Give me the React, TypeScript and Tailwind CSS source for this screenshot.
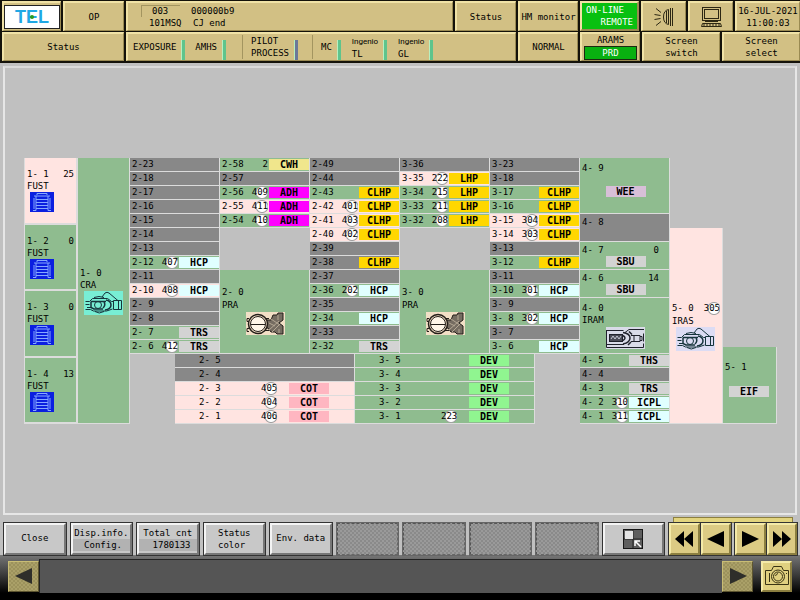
import type { ReactNode } from "react";
import clsx from "clsx";

type State = "off" | "idle" | "busy";

interface Slot {
  id: string;
  state: State;
  wafer?: string;
  plain?: boolean;
  tag?: string;
}

const STATE_BG: Record<State, string> = {
  off: "bg-[#888888]",
  idle: "bg-[#8fbc8f]",
  busy: "bg-[#ffe4e1]",
};

const TAG_BG: Record<string, string> = {
  CLHP: "bg-[#ffd700]",
  LHP: "bg-[#ffd700]",
  ADH: "bg-[#ff00ff]",
  HCP: "bg-[#e0ffff]",
  ICPL: "bg-[#e0ffff]",
  TRS: "bg-[#d3d3d3]",
  THS: "bg-[#d3d3d3]",
  SBU: "bg-[#d3d3d3]",
  EIF: "bg-[#d3d3d3]",
  WEE: "bg-[#d8bfd8]",
  CWH: "bg-[#f0e68c]",
  COT: "bg-[#ffb6c1]",
  DEV: "bg-[#90f590]",
};

const s = (id: string, state: State = "off", tag?: string, wafer?: string, plain?: boolean): Slot => ({
  id,
  state,
  tag,
  wafer,
  plain,
});

const COL_A: Slot[] = [
  s("2-23"), s("2-18"), s("2-17"), s("2-16"), s("2-15"), s("2-14"), s("2-13"),
  s("2-12", "idle", "HCP", "407"),
  s("2-11"),
  s("2-10", "busy", "HCP", "408"),
  s("2- 9"), s("2- 8"),
  s("2- 7", "idle", "TRS"),
  s("2- 6", "idle", "TRS", "412"),
];
const COL_B: Slot[] = [
  s("2-58", "idle", "CWH", "2", true),
  s("2-57"),
  s("2-56", "idle", "ADH", "409"),
  s("2-55", "busy", "ADH", "411"),
  s("2-54", "idle", "ADH", "410"),
];
const COL_C: Slot[] = [
  s("2-49"), s("2-44"),
  s("2-43", "idle", "CLHP"),
  s("2-42", "busy", "CLHP", "401"),
  s("2-41", "busy", "CLHP", "403"),
  s("2-40", "busy", "CLHP", "402"),
  s("2-39"),
  s("2-38", "off", "CLHP"),
  s("2-37"),
  s("2-36", "idle", "HCP", "202"),
  s("2-35"),
  s("2-34", "idle", "HCP"),
  s("2-33"),
  s("2-32", "idle", "TRS"),
];
const COL_D: Slot[] = [
  s("3-36"),
  s("3-35", "busy", "LHP", "222"),
  s("3-34", "idle", "LHP", "215"),
  s("3-33", "idle", "LHP", "211"),
  s("3-32", "idle", "LHP", "208"),
];
const COL_E: Slot[] = [
  s("3-23"), s("3-18"),
  s("3-17", "idle", "CLHP"),
  s("3-16", "idle", "CLHP"),
  s("3-15", "busy", "CLHP", "304"),
  s("3-14", "busy", "CLHP", "303"),
  s("3-13"),
  s("3-12", "idle", "CLHP"),
  s("3-11"),
  s("3-10", "idle", "HCP", "301"),
  s("3- 9"),
  s("3- 8", "idle", "HCP", "302"),
  s("3- 7"),
  s("3- 6", "idle", "HCP"),
];
const COL_F: Slot[] = [
  s("4- 5", "idle", "THS"),
  s("4- 4"),
  s("4- 3", "idle", "TRS"),
  s("4- 2", "idle", "ICPL", "310"),
  s("4- 1", "idle", "ICPL", "311"),
];
const COAT: Slot[] = [
  s("2- 5"), s("2- 4"),
  s("2- 3", "busy", "COT", "405"),
  s("2- 2", "busy", "COT", "404"),
  s("2- 1", "busy", "COT", "406"),
];
const DEVELOP: Slot[] = [
  s("3- 5", "idle", "DEV"),
  s("3- 4", "idle", "DEV"),
  s("3- 3", "idle", "DEV"),
  s("3- 2", "idle", "DEV"),
  s("3- 1", "idle", "DEV", "223"),
];

const EDGE = "border-r border-b border-[#dcdcdc]";

function Wafer({ children }: { children: ReactNode }) {
  return (
    <span className="inline-block bg-[radial-gradient(circle_at_10px_50%,#ffffff_5px,#a0a0a0_6px,transparent_7px)] leading-[13px]">
      {children}
    </span>
  );
}

function Tag({ name }: { name: string }) {
  return (
    <span className={clsx("block w-10 shrink-0 text-center text-[10px] leading-[11px] font-bold text-black", TAG_BG[name])}>
      {name}
    </span>
  );
}

function SlotRow({ slot }: { slot: Slot }) {
  return (
    <div className={clsx("flex h-[14px] items-center pl-[2px] leading-[13px]", EDGE, STATE_BG[slot.state])}>
      <span className="flex-1">{slot.id}</span>
      {slot.wafer && (
        <span className="mr-px">{slot.plain ? slot.wafer : <Wafer>{slot.wafer}</Wafer>}</span>
      )}
      {slot.tag && <Tag name={slot.tag} />}
    </div>
  );
}

function WideRow({ slot }: { slot: Slot }) {
  return (
    <div
      className={clsx(
        "grid h-[14px] grid-cols-[62fr_28fr_65fr] items-center pl-6 leading-[13px]",
        EDGE,
        STATE_BG[slot.state],
      )}
    >
      <span>{slot.id}</span>
      <span>{slot.wafer && <Wafer>{slot.wafer}</Wafer>}</span>
      <span>{slot.tag && <Tag name={slot.tag} />}</span>
    </div>
  );
}

const Rows = ({ slots }: { slots: Slot[] }) => (
  <div>
    {slots.map((slot) => (
      <SlotRow key={slot.id} slot={slot} />
    ))}
  </div>
);

/* ---------- drawings ---------- */

function CassetteIcon() {
  return (
    <svg viewBox="0 0 24 20" className="block h-5 w-6" aria-hidden="true">
      <rect width="24" height="20" fill="#0b1fe0" />
      <path
        d="M7 3V1.500h10V3M3 18.500h3V4h12v14.500h3M4 17V6M20 17V6M6 4H4M18 4h2M6 7.500h12M6 10.500h12M6 13.500h12M6 16.500h12"
        fill="none"
        stroke="#86a8ff"
      />
    </svg>
  );
}

function ArmIcon({ bg }: { bg: string }) {
  return (
    <svg viewBox="0 0 39 24" className="block h-6 w-[39px]" aria-hidden="true">
      <rect width="39" height="24" fill={bg} />
      <g fill="none" stroke="#16343c">
        <path d="M18 6 21 2q2-1.500 4 0l10 8.500M11 20.500q4 3 9 0M10 6.500q5-2 10 0" />
        <path d="M1.500 10.500h4l3-3h15l4 3h2M1.500 18.500h5l3 1.500h13l6-2" />
        <path d="M1.500 13.500h4M3 16.500h4" />
        <path d="M29.500 9.500h8v9h-8zM34.500 9.500v9" />
        <path d="M7 10.500h15M7 10.500v6l3 1.500h9" strokeWidth="1.500" />
        <path d="M22 9q5 1 5 5t-6 5M20 11q2 3-1 6" strokeWidth="1.500" />
        <circle cx="14" cy="14" r="3.500" />
      </g>
    </svg>
  );
}

function RotaryArmIcon() {
  return (
    <svg viewBox="0 0 39 24" className="block h-6 w-[39px]" aria-hidden="true">
      <rect width="39" height="23" fill="#f2dfc6" />
      <path
        d="M20 8h5l2-5h4l1-2h5v7l-4 3 4 3v8h-6l-2-2h-4l-3-4h-2z"
        fill="#756c61"
        stroke="#241f1a"
      />
      <path d="m23 18 10-9M26 20l8-8M25 7l9 6M23 11l6 3M32 3v5M33 17v4" stroke="#b5a894" fill="none" />
      <path d="M3 6.500H1v3h3M3 19.500H1v-3h3M18 6.500h5M18 18.500h5" stroke="#241f1a" fill="none" />
      <circle cx="12" cy="12" r="9.500" fill="#f2dfc6" stroke="#241f1a" strokeWidth="1.500" />
      <circle cx="12" cy="12" r="7.500" fill="#fff6e8" stroke="#241f1a" />
      <path d="M5 12.500h14" stroke="#241f1a" />
    </svg>
  );
}

function LinearArmIcon() {
  return (
    <svg viewBox="0 0 39 22" className="block h-[22px] w-[39px]" aria-hidden="true">
      <rect width="39" height="22" fill="#d9dbe8" />
      <g fill="none" stroke="#20222c">
        <path d="M.5 3v17.500h37v-4M.5 3.500h17M1 17.500h17M38 2.500H23l-4 3M37.500 6.500v8" />
        <rect x="3.500" y="7.500" width="13" height="7" fill="#4a4c57" />
        <path d="m5 12 2-3 2 3 2-3 2 3 2-3" stroke="#c5c7d4" />
        <path d="M17 5.500q7 1 7 5.500t-7 6M17 8.500q4 2.500 0 5M26 7.500l-3-3M25 15l-3 3" strokeWidth="1.500" />
        <path d="M25 8.500h9v6h-9M28 8.500v6M34 9.500h2v4h-2" />
      </g>
    </svg>
  );
}

function LampIcon() {
  return (
    <svg viewBox="0 0 20 20" className="h-5 w-5" fill="none" stroke="#2c2713" aria-hidden="true">
      <path d="M18.500 1v18M16.500 1v18M14.500 2.500v15M14.500 2.500q-5 1-5 7.500t5 7.500M12.500 4v12" />
      <path d="m2 1.500 5 4M.5 7.500l6 1M.5 12.500l6-1M2 18.500l5-4" />
    </svg>
  );
}

function TerminalIcon() {
  return (
    <svg viewBox="0 0 21 20" className="h-5 w-[21px]" fill="none" stroke="#2c2713" aria-hidden="true">
      <rect x="1.500" y=".5" width="18" height="13" />
      <rect x="3.500" y="2.500" width="14" height="9" />
      <path d="M4 14.500h13M1.500 16.500h18M.5 19.500h20M1.500 16.500l-1 3M19.500 16.500l1 3" />
      <path d="M2 18h17" strokeDasharray="2 1" />
    </svg>
  );
}

function ShrinkIcon() {
  return (
    <svg viewBox="0 0 20 20" className="h-5 w-5" aria-hidden="true">
      <rect x=".5" y=".5" width="19" height="19" fill="#5e5e5e" stroke="#161616" />
      <path d="M10 1v18M1 10h18" stroke="#222" />
      <rect x="2" y="2" width="8" height="8" fill="#e4e4e4" />
      <path d="m18 18-6-6M12 17v-5h5" stroke="#fff" strokeWidth="1.500" fill="none" />
    </svg>
  );
}

function CameraIcon() {
  return (
    <svg viewBox="0 0 26 20" className="h-5 w-[26px]" fill="none" stroke="#3a3414" aria-hidden="true">
      <path d="M1.500 4.500h6l2-4h8l2 4h5v14h-23z" />
      <path d="M5.500 7v9M22 7.500h1" />
      <circle cx="14" cy="10.500" r="6.500" />
      <circle cx="14" cy="10.500" r="4.500" />
      <path d="M11.500 10q.5-2 2.500-2.500" />
    </svg>
  );
}

function Arrow({ d, fill = "#000" }: { d: string; fill?: string }) {
  return (
    <svg viewBox="0 0 20 18" className="h-[18px] w-5" aria-hidden="true">
      <path d={d} fill={fill} />
    </svg>
  );
}

/* ---------- header ---------- */

const TAN =
  "flex min-w-0 items-center justify-center border-t-2 border-l-2 border-r border-b border-t-[#f0e2a6] border-l-[#f0e2a6] border-r-[#9a8a52] border-b-[#9a8a52] bg-[#d2c084] text-center whitespace-pre";

function Signal({ label, tone = "bg-[#5fc48c]" }: { label: ReactNode; tone?: string }) {
  return (
    <div className="flex h-[26px] items-center gap-[5px]">
      <span className="leading-[12px]">{label}</span>
      <span className={clsx("h-5 w-1 self-end border-l border-[#b8f0c0]", tone)} />
    </div>
  );
}

const Divider = () => <span className="h-6 w-px bg-[#a39560]" />;

function Header() {
  return (
    <header className="bg-[#14120a] pt-px pb-[2px] pl-[2px] leading-[12px]">
      <div className="grid h-[30px] grid-cols-[59fr_61fr_327fr_61fr_60fr_59fr_45fr_45fr_65fr] gap-[2px]">
        <div className={TAN}>
          <div className="relative flex h-6 w-full items-center justify-center border border-[#222] bg-white font-['Liberation_Sans',sans-serif] text-[18px] font-bold text-[#20a8e4]">
            TEL
            <span className="absolute top-[9px] left-1/2 size-1 -translate-x-1/2 rounded-full bg-[#2c9a1c]" />
          </div>
        </div>
        <button className={TAN}>OP</button>
        <div className={clsx(TAN, "justify-start! pl-[13px] text-left!")}>
          <div className="w-[39px]">
            <div className="border-t border-l border-[#a39560] pl-[10px] leading-[11px]">003</div>
            <div className="pl-2">101MSQ</div>
          </div>
          <div className="pl-[11px]">
            <div>000000b9</div>
            <div className="pl-[2px]">CJ end</div>
          </div>
        </div>
        <button className={TAN}>Status</button>
        <button className={TAN}>HM monitor</button>
        <button className="min-w-0 border-2 border-t-[#f0e2a6] border-l-[#f0e2a6] border-r-[#9a8a52] border-b-[#9a8a52] bg-[#08c010] px-1 text-white">
          <span className="block text-left">ON-LINE</span>
          <span className="block text-right">REMOTE</span>
        </button>
        <button className={TAN} aria-label="Lamp"><LampIcon /></button>
        <button className={TAN} aria-label="Terminal"><TerminalIcon /></button>
        <div className={TAN}>{"16-JUL-2021\n11:00:03"}</div>
      </div>
      <div className="mt-px grid h-[29px] grid-cols-[122fr_390fr_60fr_60fr_78fr_78fr] gap-[2px]">
        <div className={TAN}>Status</div>
        <div className={clsx(TAN, "justify-start! pl-[5px] text-left!")}>
          <div className="flex gap-[10px]">
            <Signal label="EXPOSURE" />
            <Signal label="AMHS" />
          </div>
          <div className="ml-4 flex items-center gap-2">
            <Divider />
            <Signal label={"PILOT\nPROCESS"} tone="bg-[#6c7898]" />
          </div>
          <div className="ml-[14px] flex items-center gap-2">
            <Divider />
            <div className="flex gap-[11px]">
              <Signal label="MC" />
              <Signal label={<><span className="font-[Roboto,sans-serif] text-[8px]">Ingenio</span><br />TL</>} />
              <Signal label={<><span className="font-[Roboto,sans-serif] text-[8px]">Ingenio</span><br />GL</>} />
            </div>
          </div>
        </div>
        <button className={TAN}>NORMAL</button>
        <button className={clsx(TAN, "flex-col px-[2px]")}>
          <span>ARAMS</span>
          <span className="w-full border border-[#1d2a10] bg-[#08b010] text-white">PRD</span>
        </button>
        <button className={TAN}>{"Screen\nswitch"}</button>
        <button className={TAN}>{"Screen\nselect"}</button>
      </div>
    </header>
  );
}

/* ---------- equipment map ---------- */

const STATIONS: { id: string; count: string; state: State }[] = [
  { id: "1- 1", count: "25", state: "busy" },
  { id: "1- 2", count: "0", state: "idle" },
  { id: "1- 3", count: "0", state: "idle" },
  { id: "1- 4", count: "13", state: "idle" },
];

function ProcessArm({ id }: { id: string }) {
  return (
    <div className={clsx("h-[84px] bg-[#8fbc8f] pt-4 pl-[2px] leading-[13px]", EDGE)}>
      <div>{id}</div>
      <div>PRA</div>
      <div className="flex justify-center"><RotaryArmIcon /></div>
    </div>
  );
}

function Buffer({ id, count }: { id: string; count: string }) {
  return (
    <div className={clsx("h-7 bg-[#8fbc8f] pl-[2px]", EDGE)}>
      <div className="flex justify-between pt-[2px] pr-[10px]">
        <span>{id}</span>
        <span>{count}</span>
      </div>
      <div className="flex justify-center"><Tag name="SBU" /></div>
    </div>
  );
}

function EquipmentMap() {
  return (
    <section
      aria-label="Equipment map"
      className="grid grid-cols-[54fr_52fr_450fr_90fr_53fr_54fr] leading-[12px] whitespace-pre"
    >
      <div className="grid grid-rows-4 border-l border-[#dcdcdc]">
        {STATIONS.map((st) => (
          <div key={st.id} className={clsx("border-r-2 border-b-2 border-[#dcdcdc] pt-[10px] pl-[2px]", STATE_BG[st.state])}>
            <div className="flex justify-between pr-[2px]">
              <span>{st.id}</span>
              <span>{st.count}</span>
            </div>
            <div>FUST</div>
            <div className="pl-[3px]"><CassetteIcon /></div>
          </div>
        ))}
      </div>

      <div className={clsx("bg-[#8fbc8f] pt-[109px] pl-[2px]", EDGE)}>
        <div>1- 0</div>
        <div>CRA</div>
        <div className="pl-1"><ArmIcon bg="#78eed4" /></div>
      </div>

      <div>
        <div className="grid grid-cols-5">
          <Rows slots={COL_A} />
          <div className="flex flex-col justify-between">
            <Rows slots={COL_B} />
            <ProcessArm id="2- 0" />
          </div>
          <Rows slots={COL_C} />
          <div className="flex flex-col justify-between">
            <Rows slots={COL_D} />
            <ProcessArm id="3- 0" />
          </div>
          <Rows slots={COL_E} />
        </div>
        <div className="mx-auto grid w-4/5 grid-cols-2">
          <div>{COAT.map((slot) => <WideRow key={slot.id} slot={slot} />)}</div>
          <div>{DEVELOP.map((slot) => <WideRow key={slot.id} slot={slot} />)}</div>
        </div>
      </div>

      <div>
        <div className={clsx("h-14 bg-[#8fbc8f] pt-1 pl-[2px]", EDGE)}>
          <div>4- 9</div>
          <div className="flex justify-center pt-3"><Tag name="WEE" /></div>
        </div>
        <div className={clsx("h-7 bg-[#888888] pt-[2px] pl-[2px]", EDGE)}>4- 8</div>
        <Buffer id="4- 7" count="0" />
        <Buffer id="4- 6" count="14" />
        <div className={clsx("h-14 bg-[#8fbc8f] pt-1 pl-[2px]", EDGE)}>
          <div>4- 0</div>
          <div>IRAM</div>
          <div className="flex justify-center pt-px"><LinearArmIcon /></div>
        </div>
        <Rows slots={COL_F} />
      </div>

      <div className={clsx("mt-[70px] bg-[#ffe4e1] pt-[74px] pl-[2px]", EDGE)}>
        <div className="flex justify-between pr-[2px]">
          <span>5- 0</span>
          <Wafer>305</Wafer>
        </div>
        <div>IRAS</div>
        <div className="pl-1"><ArmIcon bg="#dcdcf4" /></div>
      </div>

      <div className={clsx("mt-[189px] bg-[#8fbc8f] pt-[14px] pl-[2px]", EDGE)}>
        <div>5- 1</div>
        <div className="pt-[13px] pl-1"><Tag name="EIF" /></div>
      </div>
    </section>
  );
}

/* ---------- footer ---------- */

const GREY =
  "flex h-8 min-w-0 items-center justify-center border-2 border-t-[#f4f4f4] border-l-[#f4f4f4] border-r-[#777] border-b-[#777] bg-[#c8c8c8] whitespace-pre outline outline-[#333]";
const GOLD =
  "flex h-8 min-w-0 items-center justify-center border-2 border-t-[#f4eaa8] border-l-[#f4eaa8] border-r-[#8c7f40] border-b-[#8c7f40] bg-[#dccb84] outline outline-[#333]";
const DITHER =
  "bg-[conic-gradient(#8a8a8a_25%,#9a9a9a_0_50%,#8a8a8a_0_75%,#9a9a9a_0)] bg-size-[4px_4px]";
const GOLD_DITHER =
  "flex size-[31px] items-center justify-center border border-t-[#c9bd74] border-l-[#c9bd74] border-r-[#5d5530] border-b-[#5d5530] bg-[conic-gradient(#9c925c_25%,#aaa068_0_50%,#9c925c_0_75%,#aaa068_0)] bg-size-[4px_4px]";

function Footer() {
  return (
    <footer>
      <div className="flex items-end gap-[5px] pr-[3px] pl-1">
        <div className="grid flex-1 grid-cols-10 gap-[5px]">
          <button className={GREY}>Close</button>
          <button className={clsx(GREY, "flex-col leading-[12px]")}>
            <span>Disp.info.</span>
            <span className="w-full bg-[#b2b2b2] pr-2 text-right">Config.</span>
          </button>
          <button className={clsx(GREY, "flex-col leading-[12px]")}>
            <span>Total cnt</span>
            <span className="w-full bg-[#b2b2b2] pr-[6px] text-right">1780133</span>
          </button>
          <button className={clsx(GREY, "text-left leading-[12px]")}>{"Status\ncolor"}</button>
          <button className={GREY}>Env. data</button>
          {[1, 2, 3, 4].map((n) => (
            <button
              key={n}
              disabled
              aria-label={`Unassigned ${n}`}
              className={clsx(
                "h-8 border border-dashed border-t-[#555] border-l-[#555] border-r-[#666] border-b-[#666] outline outline-[#666]",
                DITHER,
              )}
            />
          ))}
          <button className={GREY} aria-label="Reduce"><ShrinkIcon /></button>
        </div>
        <div className="w-32">
          <div className="mx-1 h-[6px] border border-[#8c7f40] bg-[#e2d47e]" />
          <div className="grid grid-cols-2 gap-1">
            <div className="grid grid-cols-2 gap-px">
              <button className={GOLD} aria-label="First"><Arrow d="M10 1v16L1 9zM19 1v16L10 9z" /></button>
              <button className={GOLD} aria-label="Previous"><Arrow d="M18 1v16L1 9z" /></button>
            </div>
            <div className="grid grid-cols-2 gap-px">
              <button className={GOLD} aria-label="Next"><Arrow d="M2 1v16l17-8z" /></button>
              <button className={GOLD} aria-label="Last"><Arrow d="M1 1v16l9-8zM10 1v16l9-8z" /></button>
            </div>
          </div>
        </div>
      </div>
      <div className="bg-[linear-gradient(to_bottom,#777,#6a6a6a_4px,#3a3a3a_20px,#000_38px)] pt-1 pb-[7px]">
        <div className="flex items-center pr-2 pl-2">
          <button className={GOLD_DITHER} aria-label="Scroll left"><Arrow d="M18 1v16L1 9z" fill="#2e2e2a" /></button>
          <div className="h-[34px] flex-1 border-t border-l border-[#222] bg-[#555555]" />
          <button className={GOLD_DITHER} aria-label="Scroll right"><Arrow d="M2 1v16l17-8z" fill="#2e2e2a" /></button>
          <button
            className="ml-2 flex size-[31px] items-center justify-center border-2 border-t-[#f4eaa8] border-l-[#f4eaa8] border-r-[#8c7f40] border-b-[#8c7f40] bg-[#e0d080]"
            aria-label="Screen capture"
          >
            <CameraIcon />
          </button>
        </div>
      </div>
    </footer>
  );
}

export default function App() {
  return (
    <div className="flex min-h-screen flex-col bg-[#c0c0c0] font-['DejaVu_Sans_Mono',monospace] text-[9px] text-black">
      <Header />
      <main className="mx-[3px] mt-[3px] mb-[2px] flex-1 border-2 border-[#e6e6e6] border-t-[#dadada] pt-[90px] pr-[18px] pb-4 pl-[19px]">
        <EquipmentMap />
      </main>
      <Footer />
    </div>
  );
}
